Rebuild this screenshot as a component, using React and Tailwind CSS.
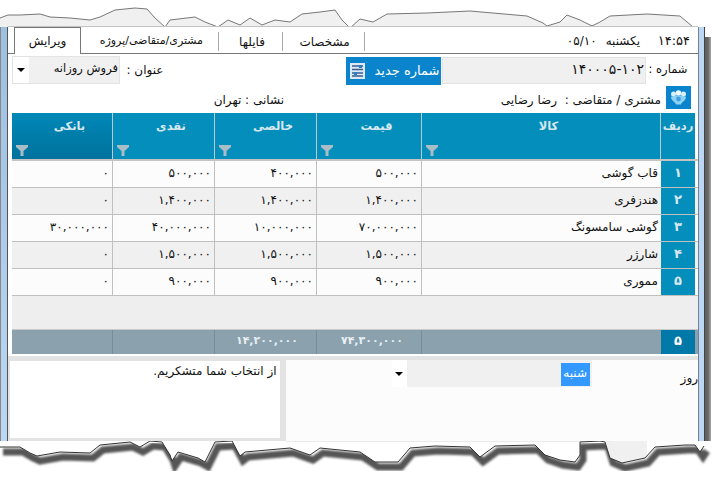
const rows = [
  { id: "۱", name: "قاب گوشی", price: "۵۰۰,۰۰۰", net: "۴۰۰,۰۰۰", cash: "۵۰۰,۰۰۰", bank: "۰" },
  { id: "۲", name: "هندزفری", price: "۱,۴۰۰,۰۰۰", net: "۱,۴۰۰,۰۰۰", cash: "۱,۴۰۰,۰۰۰", bank: "۰" },
  { id: "۳", name: "گوشی سامسونگ", price: "۷۰,۰۰۰,۰۰۰", net: "۱۰,۰۰۰,۰۰۰", cash: "۴۰,۰۰۰,۰۰۰", bank: "۳۰,۰۰۰,۰۰۰" },
  { id: "۴", name: "شارژر", price: "۱,۵۰۰,۰۰۰", net: "۱,۵۰۰,۰۰۰", cash: "۱,۵۰۰,۰۰۰", bank: "۰" },
  { id: "۵", name: "مموری", price: "۹۰۰,۰۰۰", net: "۹۰۰,۰۰۰", cash: "۹۰۰,۰۰۰", bank: "۰" },
];

const headers = [
  { title: "بانکی", bg: "bg-gradient-to-b from-[#0088b8] to-[#00719c]" },
  { title: "نقدی", bg: "bg-[#038ebc]" },
  { title: "خالصی", bg: "bg-[#038ebc]" },
  { title: "قیمت", bg: "bg-[#038ebc]" },
  { title: "کالا", bg: "bg-[#038ebc]" },
];

const topEdge =
  "0,18 8,15 20,15 40,14 50,17 70,18 90,20 100,17 115,10 135,8 147,9 155,18 165,27 170,20 195,17 205,22 218,27 228,20 240,25 250,18 262,25 275,20 290,22 302,14 320,12 335,10 342,20 350,28 360,19 373,22 387,14 427,13 470,11 527,16 543,23 547,26 560,22 567,15 580,20 592,26 600,22 610,16 647,14 680,16 693,27 703,28";
const bottomEdge =
  "0,6 20,6 30,12 37,15 60,11 90,12 100,4 130,1 140,6 150,0 162,1 170,14 172,20 178,11 198,17 205,21 215,1 232,0 240,15 245,11 290,7 310,14 320,7 360,11 375,21 398,21 410,7 435,5 470,6 480,16 495,5 535,4 545,14 560,19 575,21 580,14 580,1 600,0 605,1 610,17 622,22 645,17 655,6 685,4 695,4 700,11 704,5";

const Funnel = () => (
  <svg width="12" height="11" viewBox="0 0 12 11" className="absolute left-[4px] bottom-[3px]">
    <path d="M0 0H12V2L7.5 6V11H4.5V6L0 2Z" fill="#a9bdc7" />
  </svg>
);

const Arrow = () => (
  <svg width="8" height="4" viewBox="0 0 8 4">
    <path d="M0 0H8L4 4Z" fill="#000" />
  </svg>
);

const App = () => {
  return (
    <div className="w-[721px] h-[486px] overflow-hidden bg-white flex flex-col text-[12px] text-[#111] font-['DejaVu_Sans',sans-serif]">
      {/* torn top edge */}
      <svg width="721" height="27" viewBox="0 0 721 27" className="block shrink-0">
        <polygon points={`${topEdge} 704,27 0,27`} fill="#f0f0f0" />
        <polyline points={topEdge} fill="none" stroke="#555" strokeWidth="0.8" />
        <line x1="8" y1="26.5" x2="698" y2="26.5" stroke="#c4c4c4" />
      </svg>

      <div className="flex h-[414px] shrink-0">
        <div className="w-[8px] shrink-0 bg-gradient-to-b from-[#9dbfe0] to-[#bcd7f4] border-r border-r-[#555] border-l border-l-[#888]" />

        <div dir="ltr" className="w-[690px] shrink-0 flex flex-col bg-white">
          {/* tabs */}
          <div className="flex h-[27px] shrink-0 border-b border-[#777] pl-[6px]">
            <div className="w-[67px] h-[27px] mt-[4px] -mb-px -translate-y-[4px] relative border border-b-0 border-[#777] bg-white flex items-center justify-center">
              <span dir="rtl">ویرایش</span>
            </div>
            <div className="w-[138px] h-[19px] mt-[5px] flex items-center justify-end pr-[15px] border-r border-[#aaa]">
              <span dir="rtl" className="text-[11px] whitespace-nowrap">مشتری/متقاضی/پروژه</span>
            </div>
            <div className="w-[64px] h-[19px] mt-[5px] flex items-center justify-center border-r border-[#aaa] pl-[3px]">
              <span dir="rtl">فایلها</span>
            </div>
            <div className="w-[82px] h-[19px] mt-[5px] flex items-center justify-center border-r border-[#aaa] pl-[2px]">
              <span dir="rtl">مشخصات</span>
            </div>
            <div className="flex-1 flex items-center justify-end gap-[9px] pr-[8px] pt-[1px]">
              <span>۰۵/۱۰</span>
              <span dir="rtl">یکشنبه</span>
              <span className="w-[41px] text-right text-[13px]">۱۴:۵۴</span>
            </div>
          </div>

          {/* title row */}
          <div className="flex h-[30px] shrink-0 items-start pt-[2px] pl-[4px]">
            <div className="w-[108px] h-[28px] border border-[#e3e3e3] bg-[#f0f0f0] flex">
              <div className="w-[16px] bg-white flex items-center justify-center"><Arrow /></div>
              <div dir="rtl" className="flex-1 pr-[1px] pt-[3px] text-[11.5px]">فروش روزانه</div>
            </div>
            <div dir="rtl" className="w-[50px] pt-[5px] text-center">عنوان :</div>
            <div className="w-[176px]" />
            <button className="w-[95px] h-[28px] mt-px bg-[#0a84cc] flex items-center text-white pl-[4px]">
              <svg width="15" height="16" viewBox="0 0 15 16" className="shrink-0">
                <rect x="0" y="0" width="15" height="16" fill="#dfe8f5" />
                <path d="M2 3H13M2 6.5H13M2 10H13M2 13H13" stroke="#3a5f8c" strokeWidth="1.4" />
                <rect x="9" y="2" width="3" height="3" fill="#2d7dc6" />
                <rect x="4" y="9" width="3" height="3" fill="#2d7dc6" />
              </svg>
              <span dir="rtl" className="flex-1 text-center text-[13px] pl-[8px] whitespace-nowrap">شماره جدید</span>
            </button>
            <div className="w-[204px] h-[27px] mt-px ml-[1px] border border-[#e3e3e3] bg-[#f0f0f0] text-right pr-[1px] text-[14px] leading-[23px]">
              ۱۴۰۰۰۵-۱۰۲
            </div>
            <div dir="rtl" className="w-[44px] pt-[5px] text-center text-[11.5px] whitespace-nowrap">شماره :</div>
          </div>

          {/* customer row */}
          <div className="flex h-[29px] shrink-0 pl-[200px]">
            <div dir="rtl" className="w-[76px] pt-[7px] whitespace-nowrap">نشانی : تهران</div>
            <div className="flex-1 flex justify-end pt-[7px]">
              <span dir="rtl" className="whitespace-nowrap">مشتری / متقاضی :&nbsp; رضا رضایی</span>
            </div>
            <div className="w-[25px] h-[23px] ml-[5px] mr-[7px] mt-[2px] bg-[#0a84cc] flex items-center justify-center shrink-0">
              <svg width="17" height="15" viewBox="0 0 17 15">
                <circle cx="3.5" cy="4" r="2.5" fill="#d8f0fb" />
                <circle cx="8.5" cy="3" r="2.8" fill="#eef9fd" />
                <circle cx="13.5" cy="4" r="2.5" fill="#d8f0fb" />
                <path d="M1 7C3 5 14 5 16 7C16 11 12 11 11 14.5H6C5 11 1 11 1 7Z" fill="#8fd3f4" />
                <circle cx="8.5" cy="9" r="2.4" fill="#3f9fe6" />
              </svg>
            </div>
          </div>

          {/* grid */}
          <div className="pl-[4px] flex flex-col h-[243px] shrink-0">
            <div className="grid grid-cols-[101px_102px_102px_105px_239px_34px] h-[48px] border-b-2 border-[#c4c4c4] shrink-0">
              {headers.map((h) => (
                <div key={h.title} className={`relative ${h.bg} border-r border-[#b9c9d0] text-center pl-[15px] pt-[5px] font-bold text-[#d9e8ef] text-[11.5px]`}>
                  <span dir="rtl">{h.title}</span>
                  <Funnel />
                </div>
              ))}
              <div className="bg-[#038ebc] text-center pt-[5px] font-bold text-[#d9e8ef] text-[11.5px]">
                <span dir="rtl">ردیف</span>
              </div>
            </div>

            {rows.map((r, i) => (
              <div
                key={r.id}
                className={`grid grid-cols-[101px_102px_102px_105px_239px_34px] h-[27px] shrink-0 border-b border-[#c0c0c0] leading-[24px] ${i % 2 ? "bg-[#f0f0f0]" : "bg-[#fcfcfc]"}`}
              >
                <div className="border-r border-[#c0c0c0] text-right pr-[3px] whitespace-nowrap">{r.bank}</div>
                <div className="border-r border-[#c0c0c0] text-right pr-[3px] whitespace-nowrap">{r.cash}</div>
                <div className="border-r border-[#c0c0c0] text-right pr-[3px] whitespace-nowrap">{r.net}</div>
                <div className="border-r border-[#c0c0c0] text-right pr-[3px] whitespace-nowrap">{r.price}</div>
                <div dir="rtl" className="text-right pr-[3px]">{r.name}</div>
                <div className="bg-[#038ebc] text-center text-[#d9e8ef] font-bold text-[13px]">{r.id}</div>
              </div>
            ))}

            <div className="h-[34px] shrink-0 bg-[#eeeeee] border-b border-[#c8c8c8]" />

            <div className="grid grid-cols-[101px_102px_102px_105px_239px_34px] h-[24px] shrink-0 bg-[#8ba2ae] text-[#e8eff2] font-bold text-[11px] leading-[22px]">
              <div className="border-r border-[#7c8a92]" />
              <div className="border-r border-[#7c8a92]" />
              <div className="border-r border-[#7c8a92] text-right pr-[18px]">۱۴,۲۰۰,۰۰۰</div>
              <div className="border-r border-[#7c8a92] text-right pr-[18px]">۷۴,۳۰۰,۰۰۰</div>
              <div />
              <div className="bg-[#0079a8] text-center text-white text-[13px]">۵</div>
            </div>
          </div>

          {/* bottom panels */}
          <div className="flex flex-1 min-h-0 bg-[#e3e3e3] pt-[4px]">
            <div dir="rtl" className="ml-[1px] w-[272px] h-[79px] bg-white border border-[#e3e3e3] pr-[3px] pt-[1px]">
              از انتخاب شما متشکریم.
            </div>
            <div className="ml-[5px] flex-1 bg-[#fcfcfc] flex items-start">
              <div className="ml-[106px] w-[200px] h-[27px] bg-[#f0f0f0] flex">
                <div className="w-[15px] bg-white flex items-center justify-center"><Arrow /></div>
                <div className="flex-1 flex justify-end pr-[2px] pt-[3px]">
                  <span dir="rtl" className="w-[29px] h-[23px] bg-[#3399ff] text-white text-center text-[12px] leading-[21px] overflow-hidden whitespace-nowrap">شنبه</span>
                </div>
              </div>
              <span dir="rtl" className="ml-[89px] pt-[9px]">روز</span>
            </div>
          </div>
        </div>

        <div className="w-[6px] shrink-0 bg-[#bcd7f4] border-l border-[#6f8296]" />
        <div className="w-[1px] shrink-0 bg-[#444]" />
        <div className="w-[6px] shrink-0 bg-gradient-to-r from-[#5f5f5f] via-[#666] to-[#aaa] mt-[10px]" />
      </div>

      {/* torn bottom edge */}
      <svg width="721" height="45" viewBox="0 0 721 45" className="block shrink-0">
        <defs>
          <filter id="edgeBlur">
            <feGaussianBlur stdDeviation="1" />
          </filter>
        </defs>
        <polyline points={bottomEdge} transform="translate(3 5)" fill="none" stroke="#555" strokeWidth="7" filter="url(#edgeBlur)" />
        <polygon points={`${bottomEdge} 704,0 0,0`} fill="#fff" />
        <polygon points="600,0 605,1 610,17 622,22 645,17 647,16 647,0" fill="#f0f0f0" />
        <line x1="286" y1="0.5" x2="611" y2="0.5" stroke="#eaeaea" />
        <polyline points={bottomEdge} fill="none" stroke="#333" strokeWidth="1" />
      </svg>
    </div>
  );
};

export default App;
